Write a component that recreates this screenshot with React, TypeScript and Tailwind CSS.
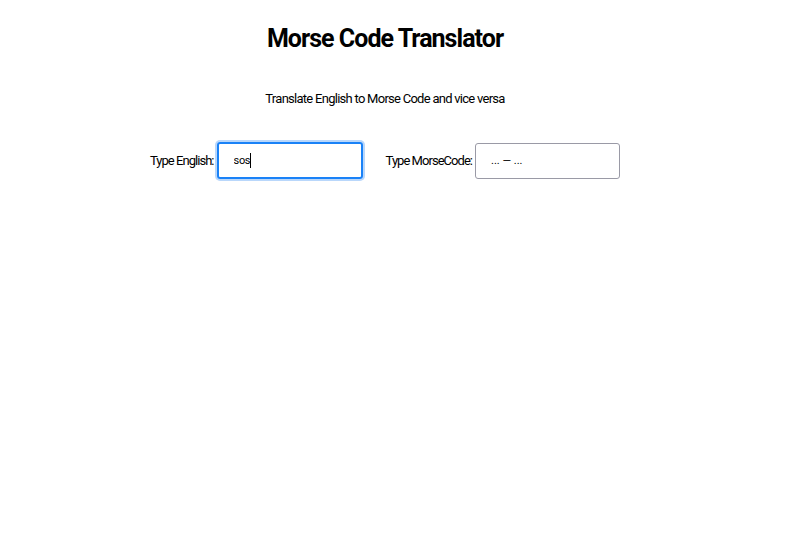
export default function App() {
  return (
    <div className="min-h-screen bg-white text-black w-[770px] tracking-[-0.06em]" style={{ fontFamily: "Roboto, 'Liberation Sans', sans-serif" }}>
      <div className="flex flex-col items-center pt-[22px]">
        <h1 className="text-[25px] font-bold leading-[34px]">Morse Code Translator</h1>
        <p className="mt-[34px] text-[13px] leading-[18px] tracking-[-0.056em]">Translate English to Morse Code and vice versa</p>
        <div className="mt-[34px] flex items-center">
          <label className="text-[13px] mr-[3px]">Type English:</label>
          <div className="relative">
            <input
              readOnly
              value="sos"
              className="w-[146px] h-[37px] rounded-[3px] border-2 border-[#1a82f7] pl-[15px] text-[11px] tracking-[-0.03em] outline-none shadow-[0_0_0_2px_#b9d7fb]"
            />
            <span className="absolute left-[33px] top-[11px] h-[15px] w-px bg-black" />
          </div>
          <label className="text-[13px] ml-[23px] mr-[3px]">Type MorseCode:</label>
          <input
            readOnly
            value="... — ..."
            className="w-[145px] h-[36px] rounded-[3px] border border-[#9a9aa6] pl-[15px] text-[11px] tracking-normal outline-none"
          />
        </div>
      </div>
    </div>
  );
}
